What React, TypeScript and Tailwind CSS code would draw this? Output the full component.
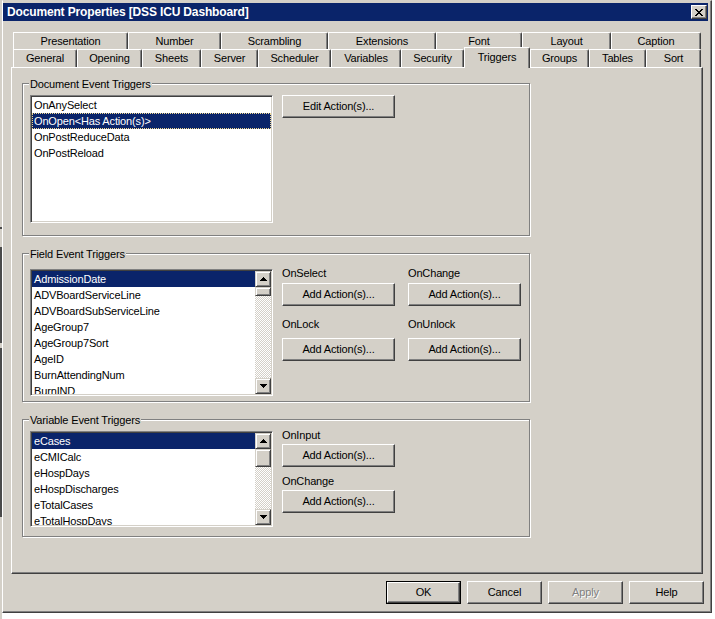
import type { ReactNode } from "react";

const docEvents = ["OnAnySelect", "OnOpen<Has Action(s)>", "OnPostReduceData", "OnPostReload"];

const fields = [
  "AdmissionDate",
  "ADVBoardServiceLine",
  "ADVBoardSubServiceLine",
  "AgeGroup7",
  "AgeGroup7Sort",
  "AgeID",
  "BurnAttendingNum",
  "BurnIND",
];

const variables = ["eCases", "eCMICalc", "eHospDays", "eHospDischarges", "eTotalCases", "eTotalHospDays"];

const backTabs = [
  { label: "Presentation", w: "w-[115px]" },
  { label: "Number", w: "w-[93px]" },
  { label: "Scrambling", w: "w-[107px]" },
  { label: "Extensions", w: "w-[108px]" },
  { label: "Font", w: "w-[86px]" },
  { label: "Layout", w: "w-[89px]" },
  { label: "Caption", w: "w-[90px]" },
];

const frontTabs = [
  { label: "General", w: "w-[64px]" },
  { label: "Opening", w: "w-[65px]" },
  { label: "Sheets", w: "w-[59px]" },
  { label: "Server", w: "w-[57px]" },
  { label: "Scheduler", w: "w-[73px]" },
  { label: "Variables", w: "w-[70px]" },
  { label: "Security", w: "w-[63px]" },
  { label: "Triggers", w: "w-[66px]", active: true },
  { label: "Groups", w: "w-[59px]" },
  { label: "Tables", w: "w-[57px]" },
  { label: "Sort", w: "w-[55px]" },
];

const raised =
  "bg-[#d4d0c8] border border-t-white border-l-white border-r-[#404040] border-b-[#404040] shadow-[inset_-1px_-1px_#808080]";

function Btn({ children, className = "", disabled = false }: { children: ReactNode; className?: string; disabled?: boolean }) {
  return (
    <div
      className={`flex items-center justify-center shrink-0 ${raised} ${
        disabled ? "text-[#808080] [text-shadow:1px_1px_#ffffff]" : "text-black"
      } ${className}`}
    >
      {children}
    </div>
  );
}

function Tab({ label, w, active }: { label: string; w: string; active?: boolean }) {
  if (active) {
    return (
      <div
        className={`${w} relative z-10 -mb-px h-[21px] pb-[2px] flex items-center justify-center bg-[#d4d0c8] rounded-tr-[2px] border-l border-t border-r border-l-white border-t-white border-r-[#404040] shadow-[inset_-1px_0_#808080]`}
      >
        {label}
      </div>
    );
  }
  return (
    <div
      className={`${w} h-full flex items-center justify-center rounded-tr-[2px] border-l border-t border-r border-l-white border-t-white border-r-[#404040] shadow-[inset_-1px_0_#808080]`}
    >
      {label}
    </div>
  );
}

function SbButton({ up }: { up?: boolean }) {
  return (
    <div className="w-4 h-4 shrink-0 flex items-center justify-center bg-[#d4d0c8] border border-t-[#d4d0c8] border-l-[#d4d0c8] border-r-[#404040] border-b-[#404040] shadow-[inset_1px_1px_#ffffff,inset_-1px_-1px_#808080]">
      <svg width="7" height="4" viewBox="0 0 7 4" shapeRendering="crispEdges">
        {up ? (
          <>
            <rect x="3" y="0" width="1" height="1" fill="#000" />
            <rect x="2" y="1" width="3" height="1" fill="#000" />
            <rect x="1" y="2" width="5" height="1" fill="#000" />
            <rect x="0" y="3" width="7" height="1" fill="#000" />
          </>
        ) : (
          <>
            <rect x="0" y="0" width="7" height="1" fill="#000" />
            <rect x="1" y="1" width="5" height="1" fill="#000" />
            <rect x="2" y="2" width="3" height="1" fill="#000" />
            <rect x="3" y="3" width="1" height="1" fill="#000" />
          </>
        )}
      </svg>
    </div>
  );
}

function ScrollBar({ thumb }: { thumb: string }) {
  return (
    <div className="w-4 h-full shrink-0 flex flex-col bg-[image:repeating-conic-gradient(#d4d0c8_0%_25%,#ffffff_0%_50%)] bg-[length:2px_2px]">
      <SbButton up />
      <div
        className={`${thumb} w-4 shrink-0 bg-[#d4d0c8] border border-t-[#d4d0c8] border-l-[#d4d0c8] border-r-[#404040] border-b-[#404040] shadow-[inset_1px_1px_#ffffff,inset_-1px_-1px_#808080]`}
      />
      <div className="flex-1" />
      <SbButton />
    </div>
  );
}

function ListBox({
  items,
  sel,
  className,
  thumb,
  focus,
}: {
  items: string[];
  sel: number;
  className: string;
  thumb?: string;
  focus?: boolean;
}) {
  return (
    <div
      className={`w-[243px] shrink-0 flex bg-white p-px border border-t-[#808080] border-l-[#808080] border-r-white border-b-white shadow-[inset_1px_1px_#404040,inset_-1px_-1px_#d4d0c8] ${className}`}
    >
      <div className="flex-1 overflow-hidden">
        {items.map((it, i) => (
          <div
            key={it}
            className={`h-4 leading-4 pl-[2px] whitespace-nowrap ${i === sel ? "bg-[#0a246a] text-white" : "text-black"} ${
              i === sel && focus ? "outline-1 outline-dotted outline-[#f0d890] -outline-offset-1" : ""
            }`}
          >
            {it}
          </div>
        ))}
      </div>
      {thumb && <ScrollBar thumb={thumb} />}
    </div>
  );
}

function Group({ title, className, children }: { title: string; className: string; children: ReactNode }) {
  return (
    <div
      className={`relative ml-[10px] w-[508px] flex items-start pl-[7px] border border-[#808080] shadow-[inset_1px_1px_#ffffff,1px_1px_#ffffff] ${className}`}
    >
      <span className="absolute -top-[6px] left-[6px] px-px bg-[#d4d0c8] leading-[13px]">{title}</span>
      {children}
    </div>
  );
}

function Trigger({ label, className }: { label: string; className: string }) {
  return (
    <div className="w-[113px]">
      <div className="h-[13px] leading-[13px]">{label}</div>
      <Btn className={`w-[113px] h-[23px] ${className}`}>Add Action(s)...</Btn>
    </div>
  );
}

export default function App() {
  return (
    <div className="flex w-[715px] h-[619px] bg-white text-[11px] leading-[13px] tracking-[-0.15px] text-black font-['Liberation_Sans',Arial,sans-serif]">
      <div className="w-[2px] h-[619px] flex flex-col bg-[#d4d0c8]">
        <div className="h-[227px]" />
        <div className="h-[2px] bg-[#4a4a4a]" />
        <div className="h-[18px]" />
        <div className="h-[96px] bg-[#4a4a4a]" />
        <div className="h-[5px]" />
        <div className="h-[169px] bg-[#4a4a4a]" />
      </div>

      <div className="w-[710px] h-[613px] pt-[2px] flex flex-col bg-[#d4d0c8] border border-t-[#d4d0c8] border-l-white border-r-[#404040] border-b-[#404040] shadow-[inset_-1px_-1px_#808080]">
        <div className="h-[18px] mr-[3px] flex items-center justify-between pl-[4px] pr-[1px] bg-[#0a246a]">
          <span className="text-white font-bold text-[12px]">Document Properties [DSS ICU Dashboard]</span>
          <div className="w-4 h-[14px] flex items-center justify-center bg-[#d4d0c8] border border-t-white border-l-white border-r-[#404040] border-b-[#404040] shadow-[inset_-1px_-1px_#808080]">
            <svg width="8" height="7" viewBox="0 0 8 7" shapeRendering="crispEdges">
              {[0, 1, 2, 3, 4, 5, 6].map((i) => (
                <g key={i}>
                  <rect x={i} y={i} width="2" height="1" fill="#000" />
                  <rect x={6 - i} y={i} width="2" height="1" fill="#000" />
                </g>
              ))}
            </svg>
          </div>
        </div>

        <div className="ml-[10px] mt-[11px] h-[17px] flex">
          {backTabs.map((t) => (
            <Tab key={t.label} label={t.label} w={t.w} />
          ))}
        </div>
        <div className="ml-[10px] h-[18px] flex items-end">
          {frontTabs.map((t) => (
            <Tab key={t.label} label={t.label} w={t.w} active={t.active} />
          ))}
        </div>

        <div className="ml-[8px] w-[692px] h-[507px] shrink-0 border border-t-white border-l-white border-r-[#404040] border-b-[#404040] shadow-[inset_-1px_-1px_#808080]">
          <Group title="Document Event Triggers" className="mt-[15px] h-[153px]">
            <ListBox items={docEvents} sel={1} focus className="mt-[11px] h-[128px]" />
            <Btn className="ml-[9px] mt-[11px] w-[113px] h-[23px]">Edit Action(s)...</Btn>
          </Group>

          <Group title="Field Event Triggers" className="mt-[17px] h-[149px]">
            <ListBox items={fields} sel={0} thumb="h-[9px]" className="mt-[15px] h-[127px]" />
            <div className="ml-[9px] mt-[13px]">
              <div className="flex gap-[13px]">
                <Trigger label="OnSelect" className="mt-[3px]" />
                <Trigger label="OnChange" className="mt-[3px]" />
              </div>
              <div className="flex gap-[13px] mt-[12px]">
                <Trigger label="OnLock" className="mt-[7px]" />
                <Trigger label="OnUnlock" className="mt-[7px]" />
              </div>
            </div>
          </Group>

          <Group title="Variable Event Triggers" className="mt-[17px] h-[118px]">
            <ListBox items={variables} sel={0} thumb="h-[18px]" className="mt-[11px] h-[96px]" />
            <div className="ml-[9px] mt-[9px]">
              <Trigger label="OnInput" className="mt-[2px]" />
              <div className="mt-[8px]">
                <Trigger label="OnChange" className="mt-[2px]" />
              </div>
            </div>
          </Group>
        </div>

        <div className="mt-[7px] mr-[7px] flex justify-end gap-[6px]">
          <div className="w-[75px] h-[23px] border border-black">
            <Btn className="w-full h-full">OK</Btn>
          </div>
          <Btn className="w-[75px] h-[23px]">Cancel</Btn>
          <Btn className="w-[75px] h-[23px]" disabled>
            Apply
          </Btn>
          <Btn className="w-[75px] h-[23px]">Help</Btn>
        </div>
      </div>
    </div>
  );
}
